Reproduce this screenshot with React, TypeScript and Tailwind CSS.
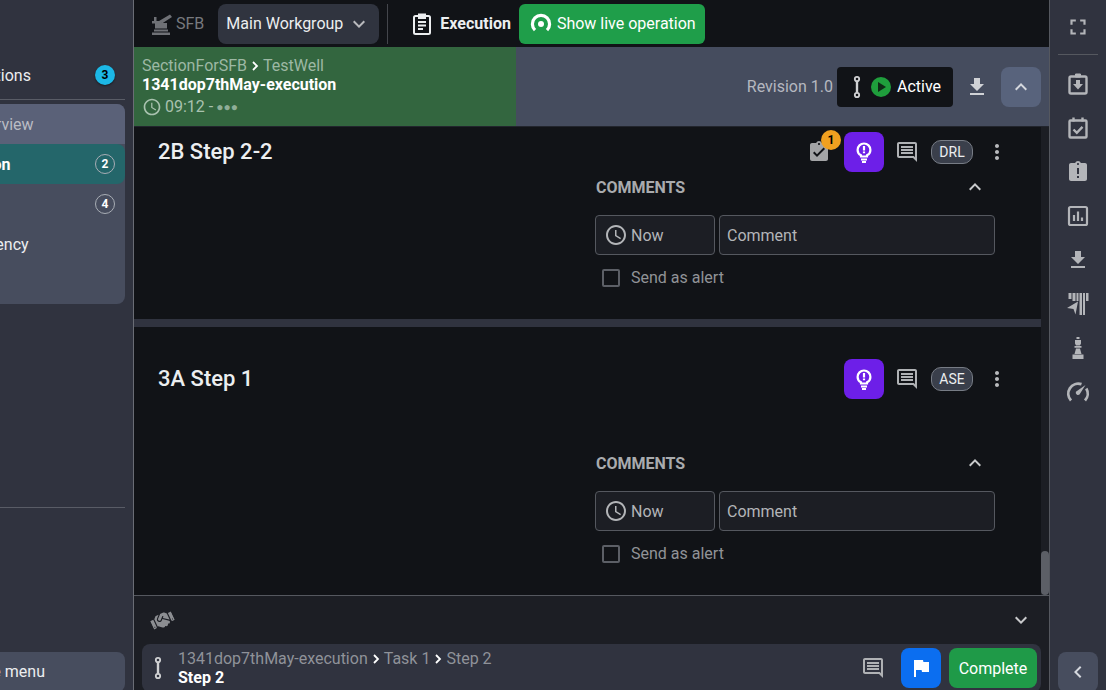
import React from "react";
import { FaHandshake } from "react-icons/fa";
import {
  MdAccessTime,
  MdAssignmentLate,
  MdAssignmentTurnedIn,
  MdChevronLeft,
  MdFileDownload,
  MdFlag,
  MdFullscreen,
  MdKeyboardArrowDown,
  MdKeyboardArrowUp,
  MdMoreVert,
  MdOutlineComment,
} from "react-icons/md";

function RouteIcon({ className }: { className?: string }) {
  return (
    <svg viewBox="0 0 12 24" className={className} fill="none" stroke="currentColor" strokeWidth="1.8">
      <circle cx="6" cy="4" r="2.2" />
      <circle cx="6" cy="20" r="2.2" />
      <path d="M6 6.2v11.6" strokeWidth="2.4" />
    </svg>
  );
}

function BulbIcon() {
  return (
    <svg viewBox="0 0 24 24" className="w-6 h-6 text-white" fill="none" stroke="currentColor">
      <path strokeWidth="2.2" d="M9 16.5v-1.2C7 14.2 5.6 12.2 5.6 9.9a6.4 6.4 0 0 1 12.8 0c0 2.3-1.4 4.3-3.4 5.4v1.200z" />
      <path strokeWidth="2" d="M9 19.500h6M10 22h4" />
      <path strokeWidth="2.2" d="M12 6v4.400M12 11.600v1.600" />
    </svg>
  );
}

function RigIcon() {
  return (
    <svg viewBox="0 0 24 22" className="w-6 h-[22px]" fill="currentColor">
      <path d="M3 19.500h18V22H3zM5 16.500h14v2H5zM6 10h12v5.500H6zM3 8h9v2.500H3zM10 8l11-6.500 2 2.500-10 6.500z" />
      <path d="M5 4h2.500v4H5z" />
    </svg>
  );
}

function LiveIcon() {
  return (
    <svg viewBox="0 0 24 24" className="w-6 h-6 text-white" fill="none" stroke="currentColor">
      <path strokeWidth="3.2" d="M6 18.200A8.600 8.600 0 1 1 18 18.200" />
      <circle cx="12" cy="12" r="3" fill="currentColor" stroke="none" />
    </svg>
  );
}

function ClipboardIcon({ className }: { className?: string }) {
  return (
    <svg viewBox="0 0 24 24" className={className} fill="none" stroke="currentColor" strokeWidth="2">
      <rect x="4" y="4" width="16" height="18" rx="1.500" />
      <path d="M9 2.500h6V6H9z" fill="currentColor" />
      <path d="M8 10h8M8 13.500h8M8 17h5" />
    </svg>
  );
}

function ReturnedIcon() {
  return (
    <svg viewBox="0 0 24 24" className="w-6 h-6" fill="none" stroke="currentColor" strokeWidth="2.4">
      <rect x="3.500" y="4.500" width="17" height="17" rx="1.500" />
      <path d="M9.500 2h5v3h-5z" fill="currentColor" strokeWidth="1" />
      <path d="M10 8h4v4h3l-5 5.500L7 12h3z" fill="currentColor" stroke="none" />
    </svg>
  );
}

function EventIcon() {
  return (
    <svg viewBox="0 0 24 24" className="w-6 h-6" fill="none" stroke="currentColor" strokeWidth="2.4">
      <rect x="3.500" y="4.500" width="17" height="17" rx="1" />
      <path d="M7.500 1.500v4M16.500 1.500v4" />
      <path d="M7.500 13.500l3.300 3.300 5.700-6" />
    </svg>
  );
}

function ChartIcon() {
  return (
    <svg viewBox="0 0 24 24" className="w-6 h-6" fill="none" stroke="currentColor" strokeWidth="2.200">
      <rect x="3" y="3" width="18" height="18" rx="1.500" />
      <path d="M8 11v6M12 7.500V17M16 13.500V17" />
    </svg>
  );
}

function ToolsIcon() {
  return (
    <svg viewBox="0 0 24 24" className="w-6 h-6" fill="currentColor">
      <path d="M2.500 1h3v6h-3zM6.500 1h3v8h-3zM10.500 1h2v8h-2zM13.500 1h2.500v22h-2.500zM17 1h2v22h-2zM20 1h2.500v8H20z" />
      <path d="M1 16l11-6.500-2.500 13-2-5.500z" />
    </svg>
  );
}

function ChessIcon() {
  return (
    <svg viewBox="0 0 24 24" className="w-6 h-6" fill="currentColor">
      <path d="M10.500 1h3v2h-3zM9 4h6v3.500l-1 2h-4l-1-2zM8.500 10h7v1.800h-7zM10 12.500h4l1.500 5.500h-7zM6.500 18.500h11V23h-11z" />
    </svg>
  );
}

function GaugeIcon() {
  return (
    <svg viewBox="0 0 24 24" className="w-6 h-6" fill="none" stroke="currentColor" strokeWidth="2.800">
      <path d="M5 20.500A10 10 0 0 1 15.500 4.200M20.300 8.500A10 10 0 0 1 19 20.500" />
      <path d="M19.500 5l-6 9.500a2.400 2.400 0 0 1-3.600-2.800z" fill="currentColor" stroke="none" />
    </svg>
  );
}

function Sep() {
  return (
    <svg viewBox="0 0 8 10" className="w-[8px] h-[10px] mx-[4px] text-white" fill="none" stroke="currentColor" strokeWidth="1.8">
      <path d="M2 1l4 4-4 4" />
    </svg>
  );
}

function Step({ title, tag, withTask, spacer }: { title: string; tag: string; withTask?: boolean; spacer: string }) {
  return (
    <section className="relative px-6 bg-[#111317]">
      <div className="flex items-center h-10 pr-[8px]">
        <h2 className="text-[22px] font-medium text-[#eceef0] -mt-[2px]">{title}</h2>
        <div className="ml-auto flex items-center">
          {withTask && (
            <div className="relative mr-[13px]">
              <MdAssignmentTurnedIn className="w-[24px] h-[24px] text-[#a3a4a6]" />
              <span className="absolute -top-[10px] left-[14px] w-[20px] h-[20px] rounded-full bg-[#f0a020] text-black text-xs font-bold flex items-center justify-center">
                1
              </span>
            </div>
          )}
          <div className="w-10 h-10 rounded-lg bg-[#6d1fe8] flex items-center justify-center">
            <BulbIcon />
          </div>
          <MdOutlineComment className="w-6 h-6 ml-[11px] text-[#b0b2b5]" />
          <span className="ml-[12px] w-[42px] h-[24px] rounded-[10px] border border-[#777c85] bg-[#3a3f4b] text-[#eceef0] text-sm flex items-center justify-center">
            {tag}
          </span>
          <MdMoreVert className="w-6 h-6 ml-[12px] text-[#b9babd]" />
        </div>
      </div>
      <div className={`ml-[437px] w-[400px] ${spacer}`}>
        <div className="h-6 flex items-center justify-between pl-px pr-[8px]">
          <span className="text-[#a9abae] text-base font-bold pt-px">COMMENTS</span>
          <MdKeyboardArrowUp className="w-6 h-6 text-[#c9cacc]" />
        </div>
        <div className="flex gap-1 mt-[16px]">
          <div className="w-[120px] h-10 rounded border border-[#55585f] bg-[#1c1e24] flex items-center pl-[8px] gap-[3px] text-[#b3b5b8]">
            <MdAccessTime className="w-[24px] h-[24px]" />
            <span className="text-base pt-px">Now</span>
          </div>
          <div className="w-[276px] h-10 rounded border border-[#55585f] bg-[#1c1e24] flex items-center pl-[7px] pt-px text-[#b3b5b8] text-base">
            Comment
          </div>
        </div>
        <div className="flex items-center mt-[11px] ml-[7px] text-[#919397] text-base">
          <span className="w-[18px] h-[18px] rounded-[2px] border-2 border-[#5c5f66]" />
          <span className="ml-[11px]">Send as alert</span>
        </div>
      </div>
    </section>
  );
}

export default function App() {
  return (
    <div className="w-[1106px] h-[690px] flex overflow-hidden bg-[#30333f] text-white font-['Roboto',sans-serif]">
      {/* left menu, pushed partly out of view */}
      <aside className="w-[134px] shrink-0 border-r border-[#6a6d75] overflow-hidden relative">
        <div className="w-[233px] -ml-[100px] h-full flex flex-col pr-[8px]">
          <div className="h-[100px] border-b border-[#595c66] flex items-center pl-[40px] pt-[50px] pr-[10px] justify-between">
            <span className="text-base text-[#eceef0] pt-[2px]">Notifications</span>
            <span className="w-5 h-5 rounded-full bg-[#1cb8e6] text-black text-xs font-bold flex items-center justify-center shadow-[0_1px_2px_rgba(0,0,0,0.5)]">
              3
            </span>
          </div>
          <div className="mt-[4px] h-[200px] rounded-lg bg-[#474d5e] overflow-hidden">
            <div className="h-10 bg-[#5a6178] flex items-center pl-[33px] pt-px text-base text-[#b9bcc4]">Task overview</div>
            <div className="h-10 bg-[#24666a] rounded-r-lg flex items-center justify-between pl-[40px] pr-[10px]">
              <span className="font-bold text-base text-white pt-px">Execution</span>
              <span className="w-5 h-5 rounded-full border border-[#a8adb5] text-xs font-bold flex items-center justify-center">2</span>
            </div>
            <div className="h-10 flex items-center justify-between pl-[47px] pr-[10px]">
              <span className="text-base">Tasks</span>
              <span className="w-5 h-5 rounded-full border border-[#a8adb5] text-xs font-bold flex items-center justify-center">4</span>
            </div>
            <div className="h-10 flex items-center pl-[40px] pt-px text-base text-[#eceef0]">Contingency</div>
          </div>
          <div className="mt-[203px] border-t border-[#595c66]" />
          <div className="mt-auto h-10 -mb-[2px] rounded-lg bg-[#474d5e] flex items-center pl-[68px] text-base text-[#eceef0]">
            Hide menu
          </div>
        </div>
      </aside>

      <main className="flex-1 min-w-0 flex flex-col bg-[#111317]">
        {/* top bar */}
        <header className="h-[47px] shrink-0 flex items-center pl-[15px] text-[#eceef0]">
          <span className="text-[#6f7176]"><RigIcon /></span>
          <span className="ml-[3px] text-base text-[#77797e]">SFB</span>
          <div className="ml-[14px] w-[161px] h-10 rounded-lg bg-[#30343f] flex items-center pl-2 text-base">
            Main Workgroup
            <MdKeyboardArrowDown className="w-6 h-6 ml-[4px] text-[#b9babd]" />
          </div>
          <div className="ml-[8px] w-px h-10 bg-[#44464c]" />
          <ClipboardIcon className="ml-[22px] w-6 h-6" />
          <span className="ml-[6px] text-base font-bold">Execution</span>
          <button className="ml-[8px] w-[186px] h-10 rounded-md bg-[#1f9e4a] flex items-center pl-[10px] text-base text-white">
            <LiveIcon />
            <span className="ml-[4px]">Show live operation</span>
          </button>
        </header>

        {/* run header */}
        <div className="h-[80px] shrink-0 flex bg-[#454c5e] border-b border-[#22252d]">
          <div className="w-[382px] bg-[#33663f] pl-[8px] pt-[9px]">
            <div className="flex items-center text-base/[19px] text-[#9db8a4]">
              SectionForSFB <Sep /> TestWell
            </div>
            <div className="font-bold text-base/[20px] text-white">1341dop7thMay-execution</div>
            <div className="flex items-center text-base/[24px] text-[#a9c2af]">
              <MdAccessTime className="w-[20px] h-[20px] mr-[3px]" />
              09:12 - <span className="ml-[3px] text-[12px] tracking-[0px] text-[#8fae98]">●●●</span>
            </div>
          </div>
          <div className="flex-1 flex items-center justify-end pr-[8px]">
            <span className="text-base text-[#b5b8c0]">Revision 1.0</span>
            <div className="ml-[4px] w-[116px] h-10 rounded bg-[#111317] flex items-center pl-[14px]">
              <RouteIcon className="w-3 h-6 text-[#d0d1d3]" />
              <span className="ml-[8px] w-5 h-5 rounded-full bg-[#1f9e3c] flex items-center justify-center">
                <span className="w-0 h-0 ml-[2px] border-y-[5px] border-y-transparent border-l-[8px] border-l-[#0f2a16]" />
              </span>
              <span className="ml-[6px] text-base">Active</span>
            </div>
            <MdFileDownload className="ml-[12px] w-6 h-6 text-[#d0d2d6]" />
            <div className="ml-[12px] w-10 h-10 rounded-lg bg-[#58637c] flex items-center justify-center">
              <MdKeyboardArrowUp className="w-6 h-6 text-[#d5d8de]" />
            </div>
          </div>
        </div>

        {/* steps */}
        <div className="flex-1 min-h-0 relative overflow-hidden pt-[5px] pr-[8px]">
          <Step title="2B Step 2-2" tag="DRL" withTask spacer="mt-[3px] pb-[29px]" />
          <div className="h-[8px] bg-[#30333f]" />
          <div className="pt-[32px]">
            <Step title="3A Step 1" tag="ASE" spacer="mt-[52px]" />
          </div>
          <div className="absolute right-0 top-0 bottom-0 w-[8px] bg-[#1c1e24]">
            <div className="absolute bottom-0 left-0 w-[8px] h-[44px] rounded-full bg-[#5c5f66]" />
          </div>
        </div>

        {/* footer */}
        <footer className="h-[95px] shrink-0 border-t border-[#55585f] bg-[#1c1e24] flex flex-col overflow-hidden">
          <div className="h-[48px] shrink-0 flex items-center justify-between pl-[17px] pr-[16px]">
            <FaHandshake className="w-[23px] h-[23px] text-[#8c8e92] -rotate-[25deg]" />
            <MdKeyboardArrowDown className="w-6 h-6 text-[#c9cacc]" />
          </div>
          <div className="h-[48px] shrink-0 mx-[8px] rounded-lg bg-[#30333f] flex items-center pl-[10px] pr-[4px]">
            <RouteIcon className="w-3 h-6 text-[#d0d1d3]" />
            <div className="ml-[14px]">
              <div className="flex items-center text-base/[19px] text-[#8f9299]">
                1341dop7thMay-execution
                <Sep />
                Task 1
                <Sep />
                Step 2
              </div>
              <div className="font-bold text-base/[19px] text-white">Step 2</div>
            </div>
            <MdOutlineComment className="ml-auto w-6 h-6 text-[#b0b2b5]" />
            <div className="ml-[16px] w-10 h-10 rounded-lg bg-[#0b6ef0] flex items-center justify-center">
              <MdFlag className="w-6 h-6 text-white" />
            </div>
            <button className="ml-[8px] w-[88px] h-10 pt-px rounded-lg bg-[#1f9a48] text-base text-white">Complete</button>
          </div>
        </footer>
      </main>

      {/* right rail */}
      <aside className="w-[57px] shrink-0 border-l border-[#55585f] flex flex-col items-center text-[#b3b5b9]">
        <div className="h-[55px] w-[40px] border-b border-[#55585f] flex items-center justify-center">
          <MdFullscreen className="w-[26px] h-[26px]" />
        </div>
        <div className="mt-[17px] flex flex-col gap-[20px] items-center">
          <ReturnedIcon />
          <EventIcon />
          <MdAssignmentLate className="w-6 h-6" />
          <ChartIcon />
          <MdFileDownload className="w-6 h-6" />
          <ToolsIcon />
          <ChessIcon />
          <GaugeIcon />
        </div>
        <div className="mt-auto -mb-[2px] w-10 h-10 rounded-lg bg-[#474d5e] flex items-center justify-center">
          <MdChevronLeft className="w-6 h-6 text-[#d5d8de]" />
        </div>
      </aside>
    </div>
  );
}
